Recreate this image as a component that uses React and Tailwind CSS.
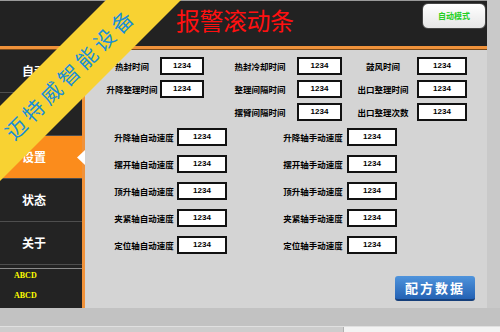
const cjk = { fontFamily: '"Noto Sans CJK SC", "Noto Sans", sans-serif' };

const Field = ({ label, labelW, gap, inputW }) => (
  <div className="flex items-center h-[18px]">
    <div
      className="text-center text-[8.5px] font-bold text-black leading-none whitespace-nowrap"
      style={{ width: labelW }}
    >
      {label}
    </div>
    <div
      className="h-[18px] bg-white border-2 border-[#111] flex items-center justify-center text-[8px] font-bold text-black"
      style={{ marginLeft: gap, width: inputW, fontFamily: '"Liberation Sans", Arial, sans-serif' }}
    >
      1234
    </div>
  </div>
);

const menu = ['自动', '手动', '设置', '状态', '关于'];

const speeds = ['升降轴', '摆开轴', '顶升轴', '夹紧轴', '定位轴'];

export default function App() {
  return (
    <div className="relative w-[500px] h-[332px] overflow-hidden bg-[#c3c3c3] flex flex-col" style={cjk}>
      <div className="flex h-[308px]">
        <div className="w-[487px] flex flex-col">
          {/* header */}
          <div className="h-[46px] bg-[#222222] border-t border-[#9a9a9a] flex items-start">
            <div className="pl-[176px] pt-[7px] text-[24px] leading-none text-[#ff1010] tracking-[-0.5px]">
              报警滚动条
            </div>
            <button className="ml-auto mt-[2px] mr-[1px] w-[64px] h-[26px] rounded-[6px] border border-[#444] bg-gradient-to-b from-white to-[#e6e6e6] text-[#22d022] text-[8px] font-bold">
              自动模式
            </button>
          </div>
          <div className="h-[4px] bg-[#f0923a] border-b border-[#7a4a1a]" />

          <div className="flex flex-1">
            {/* sidebar */}
            <div className="w-[82px] bg-[#232323] flex flex-col">
              {menu.map((m) => {
                const active = m === '设置';
                return (
                  <div
                    key={m}
                    className={
                      'relative h-[43px] flex items-center pl-[22px] text-[12px] font-bold text-white border-b border-[#4e4e4e] ' +
                      (active ? 'bg-[#fb8c1c]' : 'bg-[#232323]')
                    }
                  >
                    {m}
                    {active && (
                      <svg className="absolute right-[-3px] top-[14px]" width="8" height="15" viewBox="0 0 8 15">
                        <polygon points="0,7.5 8,0 8,15" fill="#ffffff" />
                      </svg>
                    )}
                  </div>
                );
              })}
              <div className="mt-[3px] border-t border-[#8a8a8a] pl-[14px] pt-[2px] flex flex-col gap-[10px]">
                {['ABCD', 'ABCD'].map((t, i) => (
                  <div
                    key={i}
                    className="text-[8px] font-bold text-[#ffff00] leading-[10px]"
                    style={{ fontFamily: '"Liberation Serif", "Times New Roman", serif' }}
                  >
                    {t}
                  </div>
                ))}
              </div>
            </div>
            <div className="w-[3px] bg-[#f0923a]" />

            {/* content */}
            <div className="flex-1 bg-[#d4d4d4] flex flex-col">
              <div className="flex pt-[7px] pl-[20px]">
                <div className="flex flex-col gap-[5px]">
                  <Field label="热封时间" labelW={54} gap={1} inputW={44} />
                  <Field label="升降整理时间" labelW={54} gap={1} inputW={44} />
                </div>
                <div className="ml-[24px] flex flex-col gap-[5px]">
                  <Field label="热封冷却时间" labelW={64} gap={5} inputW={45} />
                  <Field label="整理间隔时间" labelW={64} gap={5} inputW={45} />
                  <Field label="摆臂间隔时间" labelW={64} gap={5} inputW={45} />
                </div>
                <div className="ml-[11px] flex flex-col gap-[5px]">
                  <Field label="鼓风时间" labelW={60} gap={4} inputW={50} />
                  <Field label="出口整理时间" labelW={60} gap={4} inputW={50} />
                  <Field label="出口整理次数" labelW={60} gap={4} inputW={50} />
                </div>
              </div>

              <div className="flex pt-[7px] pl-[27px]">
                <div className="flex flex-col gap-[9px]">
                  {speeds.map((s) => (
                    <Field key={s} label={s + '自动速度'} labelW={64} gap={1} inputW={50} />
                  ))}
                </div>
                <div className="ml-[54px] flex flex-col gap-[9px]">
                  {speeds.map((s) => (
                    <Field key={s} label={s + '手动速度'} labelW={64} gap={2} inputW={50} />
                  ))}
                </div>
              </div>

              <div className="mt-auto mb-[7px] pr-[12px] flex justify-end">
                <button
                  className="w-[80px] h-[25px] rounded-[3px] border-b-2 border-[#163f7a] bg-gradient-to-b from-[#4f94dc] to-[#2462b4] text-white text-[13px] font-bold tracking-[2px]"
                >
                  配方数据
                </button>
              </div>
            </div>
          </div>
        </div>
        <div className="flex-1 bg-[#c9c9c9]" />
      </div>

      <div className="h-[18px] bg-[#c2c2c2]" />
      <div className="flex-1 flex border-t border-[#e0e0e0]">
        <div className="w-[344px] bg-[#cdcdcd] border-r border-[#b0b0b0]" />
        <div className="flex-1 bg-[#f3f3f3]" />
      </div>

      {/* corner ribbon */}
      <div
        className="absolute left-[-80px] top-[47px] w-[300px] h-[53px] bg-[#f8d232] flex items-center justify-center text-[21px] tracking-[4px] text-[#1b8fd6] -rotate-45"
      >
        迈特威智能设备
      </div>
    </div>
  );
}
